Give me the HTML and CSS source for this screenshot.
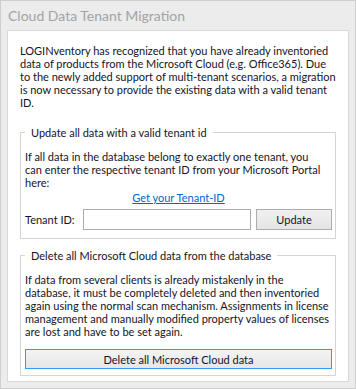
FILE: index.html
```html
<!DOCTYPE html>
<html lang="en">
<head>
  <meta charset="UTF-8" />
  <title>Cloud Data Tenant Migration</title>
  <link rel="stylesheet" href="styles.css">
</head>
<body>
  <div class="frame">
    <div class="title">Cloud Data Tenant Migration</div>
    <div class="panel">
      <p class="intro">LOGINventory has recognized that you have already inventoried data of products from the Microsoft Cloud (e.g. Office365). Due to the newly added support of multi-tenant scenarios, a migration is now necessary to provide the existing data with a valid tenant ID.</p>

      <fieldset class="group group-update">
        <legend>Update all data with a valid tenant id</legend>
        <p>If all data in the database belong to exactly one tenant, you<br>can enter the respective tenant ID from your Microsoft Portal<br>here:</p>
        <div class="link-row"><a href="#">Get your Tenant-ID</a></div>
        <div class="tenant-row">
          <label for="tenantId">Tenant ID:</label>
          <input id="tenantId" type="text">
          <button class="btn">Update</button>
        </div>
      </fieldset>

      <fieldset class="group group-delete">
        <legend>Delete all Microsoft Cloud data from the database</legend>
        <p>If data from several clients is already mistakenly in the<br>database, it must be completely deleted and then inventoried<br>again using the normal scan mechanism. Assignments in license<br>management and manually modified property values of licenses<br>are lost and have to be set again.</p>
        <button class="btn btn-wide">Delete all Microsoft Cloud data</button>
      </fieldset>
    </div>
  </div>
</body>
</html>
```
FILE: styles.css
```css
* { box-sizing: border-box; }
body {
  margin: 0;
  font-family: Lato, "Noto Sans", sans-serif;
  font-size: 11px;
  color: #141428;
}
.frame {
  width: 356px;
  height: 389px;
  background: #ececec;
  border: 1px solid #cfcfcf;
  padding: 0 6px;
}
.title {
  height: 29px;
  padding: 6px 0 0 1px;
  font-size: 14px;
  line-height: 18px;
  color: #a3a3a3;
}
.panel {
  background: #fff;
  border: 1px solid #d9d9d9;
  height: 352px;
  padding: 13px 12px 0;
}
p { margin: 0; line-height: 13px; }
.intro { margin-bottom: 17px; }
.group {
  margin: 0;
  border: 1px solid #d5d5d5;
  padding: 0 3px 0 4px;
}
.group p { white-space: nowrap; }
.group legend {
  padding: 0 6px;
  line-height: 13px;
}
.group-update { padding-top: 11px; padding-bottom: 8px; margin-bottom: 10px; }
.group-delete { padding-top: 11px; padding-bottom: 6px; }
.link-row {
  text-align: center;
  line-height: 13px;
  margin-top: 2px;
}
.link-row a { color: #0066cc; }
.tenant-row {
  display: flex;
  align-items: center;
  margin-top: 5px;
}
.tenant-row label { width: 58px; }
.tenant-row input {
  width: 168px;
  height: 21px;
  border: 1px solid #ababab;
  margin: 0 5px 0 0;
  font: inherit;
}
.btn {
  font: inherit;
  color: #141428;
  height: 21px;
  width: 76px;
  border: 1px solid #adadad;
  background: linear-gradient(#f0f0f0, #e5e5e5);
  padding: 0;
}
.btn-wide {
  width: 100%;
  height: 20px;
  margin-top: 11px;
  border-color: #3399ff;
  background: linear-gradient(#f4f4f4, #e6e6e6);
}
```
